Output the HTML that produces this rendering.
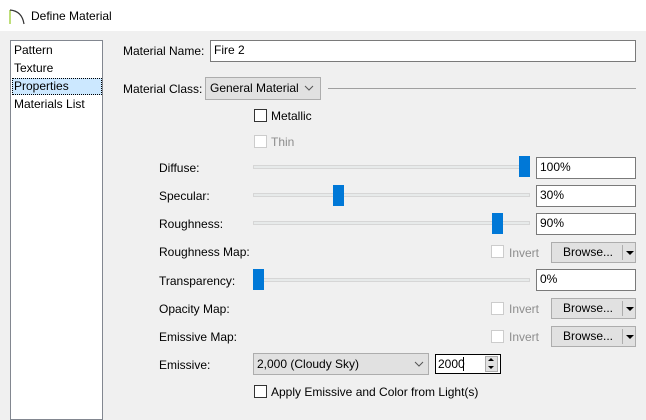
<!DOCTYPE html>
<html><head><style>
*{margin:0;padding:0;box-sizing:border-box}
body{width:646px;height:409px;overflow:hidden;background:#f0f0f0;font:12px "Liberation Sans",sans-serif;color:#000;position:relative}
.a{position:absolute;white-space:nowrap}
.t{line-height:14px}
.box{position:absolute;background:#fff;border:1px solid #7a7a7a;padding-left:3px;line-height:19px}
.trk{position:absolute;left:253px;width:277px;height:4px;background:#e7eaea;border:1px solid #d6d6d6}
.th{position:absolute;width:11px;height:21px;background:#0078d7}
.cb{position:absolute;width:13px;height:13px;background:#fff;border:1px solid #333}
.cbd{border-color:#ccc}
.gray{color:#8d8d8d}
.br{position:absolute;left:551px;width:85px;height:21px;background:#e1e1e1;border:1px solid #adadad}
.br span{position:absolute;left:11px;top:2px}
.br i{position:absolute;left:70px;top:2px;width:1px;height:15px;background:#adadad}
.br b{position:absolute;left:74px;top:8px;border-left:4px solid transparent;border-right:4px solid transparent;border-top:4px solid #000}
</style></head><body>
<div class="a" style="left:0;top:0;width:646px;height:31px;background:#fff"></div>
<svg class="a" style="left:8px;top:7px" width="18" height="18"><path d="M2 17V3" stroke="#9acd32" stroke-width="1.3" fill="none"/><path d="M2 3Q14 4 16 17" stroke="#333" stroke-width="1.2" fill="none"/></svg>
<div class="a t" style="left:31px;top:9px">Define Material</div>

<div class="a" style="left:10px;top:40px;width:93px;height:380px;background:#fff;border:1px solid #828790"></div>
<div class="a t" style="left:14px;top:43px">Pattern</div>
<div class="a t" style="left:14px;top:61px">Texture</div>
<div class="a" style="left:12px;top:78px;width:90px;height:17px;background:#cce8ff;border:1px dotted #000"></div>
<div class="a t" style="left:14px;top:79px">Properties</div>
<div class="a t" style="left:14px;top:97px">Materials List</div>

<div class="a t" style="left:123px;top:44px">Material Name:</div>
<div class="box" style="left:210px;top:40px;width:426px;height:22px">Fire 2</div>
<div class="a t" style="left:123px;top:82px">Material Class:</div>
<div class="a" style="left:205px;top:77px;width:116px;height:23px;background:#e1e1e1;border:1px solid #adadad;padding:3px 0 0 4px">General Material</div>
<svg class="a" style="left:304px;top:85px" width="10" height="6"><path d="M1 1l4 4 4-4" stroke="#555" fill="none"/></svg>
<div class="a" style="left:328px;top:88px;width:308px;height:1px;background:#a0a0a0"></div>

<div class="cb" style="left:254px;top:109px"></div><div class="a t" style="left:271px;top:109px">Metallic</div>
<div class="cb cbd" style="left:254px;top:135px"></div><div class="a t gray" style="left:271px;top:135px">Thin</div>

<div class="a t" style="left:159px;top:161px">Diffuse:</div>
<div class="a t" style="left:159px;top:189px">Specular:</div>
<div class="a t" style="left:159px;top:217px">Roughness:</div>
<div class="a t" style="left:159px;top:245px">Roughness Map:</div>
<div class="a t" style="left:159px;top:274px">Transparency:</div>
<div class="a t" style="left:159px;top:302px">Opacity Map:</div>
<div class="a t" style="left:159px;top:330px">Emissive Map:</div>
<div class="a t" style="left:159px;top:358px">Emissive:</div>

<div class="trk" style="top:165px"></div><div class="th" style="left:519px;top:156px"></div>
<div class="trk" style="top:193px"></div><div class="th" style="left:333px;top:185px"></div>
<div class="trk" style="top:221px"></div><div class="th" style="left:492px;top:213px"></div>
<div class="trk" style="top:278px"></div><div class="th" style="left:253px;top:269px"></div>

<div class="box" style="left:536px;top:157px;width:100px;height:22px">100%</div>
<div class="box" style="left:536px;top:185px;width:100px;height:22px">30%</div>
<div class="box" style="left:536px;top:213px;width:100px;height:22px">90%</div>
<div class="box" style="left:536px;top:269px;width:100px;height:22px">0%</div>

<div class="cb cbd" style="left:491px;top:245px"></div><div class="a t gray" style="left:509px;top:246px">Invert</div>
<div class="br" style="top:242px"><span>Browse...</span><i></i><b></b></div>
<div class="cb cbd" style="left:491px;top:302px"></div><div class="a t gray" style="left:509px;top:302px">Invert</div>
<div class="br" style="top:298px"><span>Browse...</span><i></i><b></b></div>
<div class="cb cbd" style="left:491px;top:330px"></div><div class="a t gray" style="left:509px;top:330px">Invert</div>
<div class="br" style="top:326px"><span>Browse...</span><i></i><b></b></div>

<div class="a" style="left:253px;top:353px;width:176px;height:22px;background:#e1e1e1;border:1px solid #adadad;padding:3px 0 0 3px">2,000 (Cloudy Sky)</div>
<svg class="a" style="left:414px;top:361px" width="10" height="6"><path d="M1 1l4 4 4-4" stroke="#555" fill="none"/></svg>
<div class="a" style="left:435px;top:354px;width:66px;height:20px;background:#fff;border:1px solid #000;padding:2px 0 0 2px">2000</div>
<div class="a" style="left:463px;top:357px;width:1px;height:14px;background:#000"></div>
<div class="a" style="left:485px;top:356px;width:13px;height:16px;background:#e1e1e1;border:1px solid #adadad"></div>
<div class="a" style="left:488px;top:358px;border-left:3px solid transparent;border-right:3px solid transparent;border-bottom:3px solid #000"></div>
<div class="a" style="left:488px;top:366px;border-left:3px solid transparent;border-right:3px solid transparent;border-top:3px solid #000"></div>

<div class="cb" style="left:254px;top:385px"></div><div class="a t" style="left:271px;top:385px">Apply Emissive and Color from Light(s)</div>
</body></html>
